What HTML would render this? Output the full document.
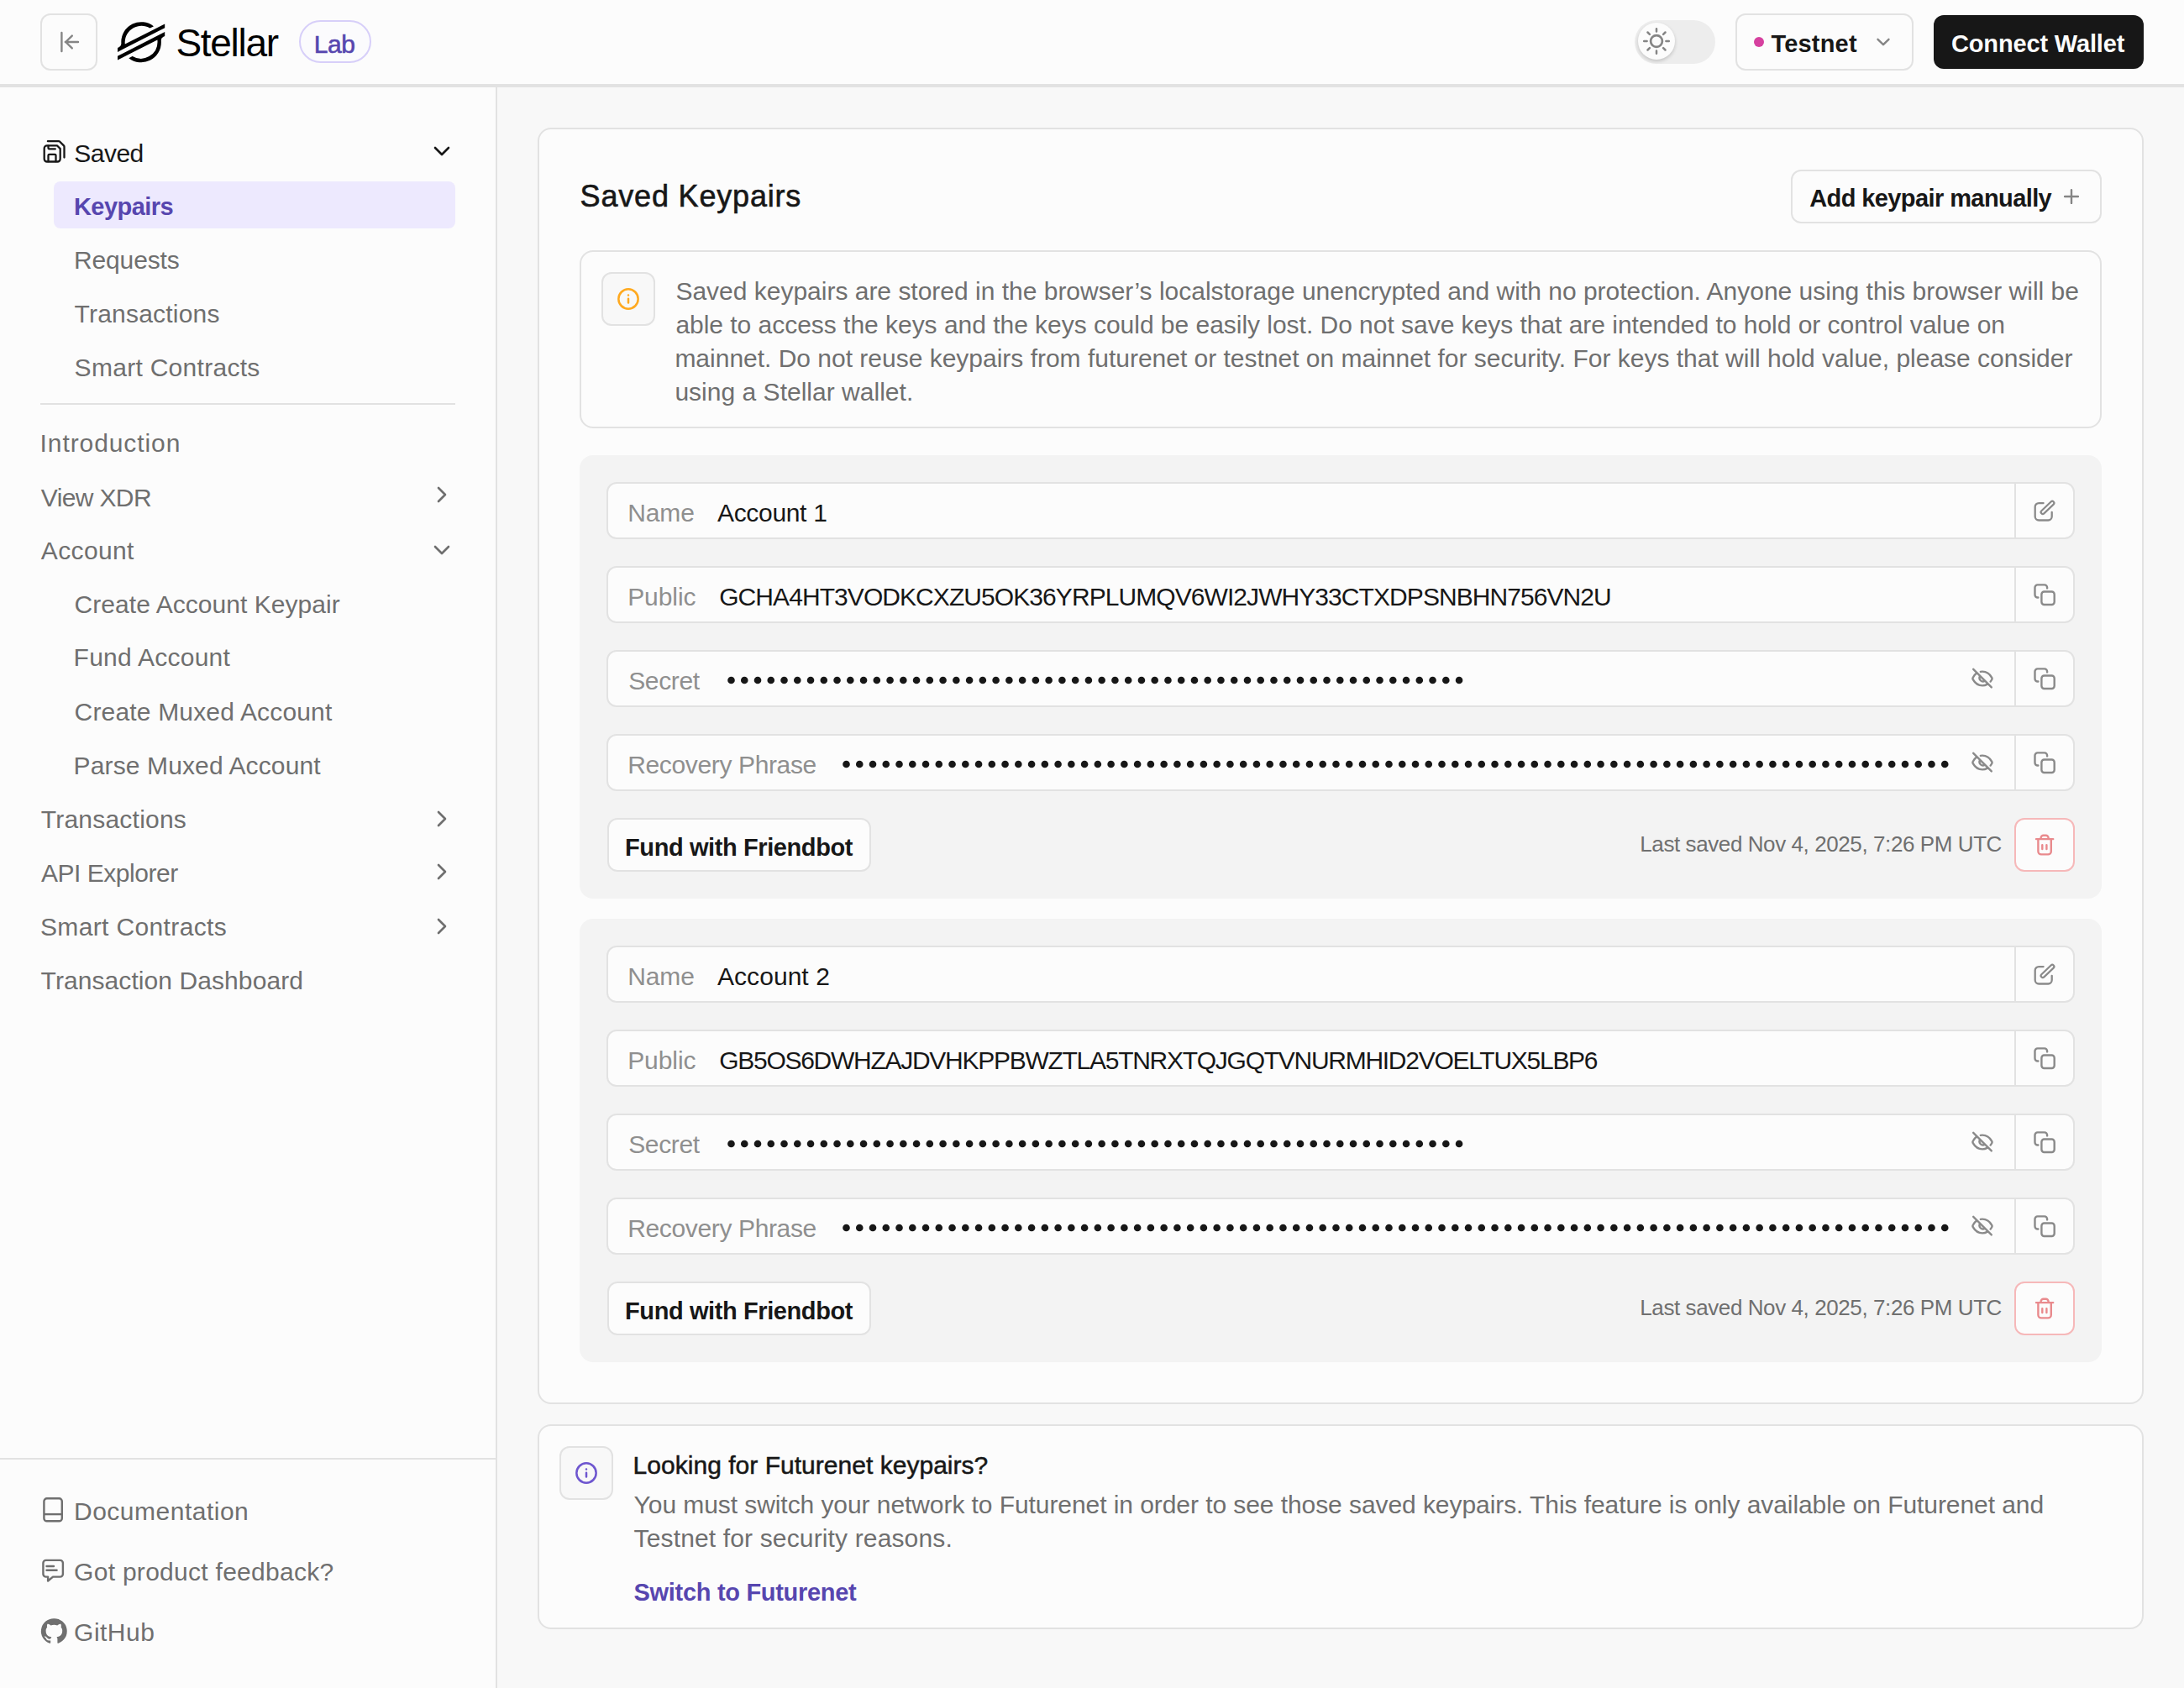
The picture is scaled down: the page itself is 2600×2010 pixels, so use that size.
<!DOCTYPE html>
<html><head><meta charset="utf-8"><title>Stellar Lab - Saved Keypairs</title>
<style>
html,body{margin:0;padding:0;}
body{width:1300px;height:1005px;position:relative;overflow:hidden;background:#f8f8f8;font-family:"Liberation Sans", sans-serif;}
@media (min-width:1950px){html{zoom:2;}}
.t{position:absolute;white-space:nowrap;line-height:20px;font-family:"Liberation Sans", sans-serif;}
svg{overflow:visible}
</style></head><body>
<div style="position:absolute;left:0.00px;top:0.00px;width:1300.00px;height:50.00px;box-sizing:border-box;background:#fcfcfc"></div>
<div style="position:absolute;left:0.00px;top:50.00px;width:1300.00px;height:2.00px;box-sizing:border-box;background:#e2e2e2"></div>
<div style="position:absolute;left:0.00px;top:52.00px;width:295.00px;height:953.00px;box-sizing:border-box;background:#fcfcfc"></div>
<div style="position:absolute;left:295.00px;top:52.00px;width:1.00px;height:953.00px;box-sizing:border-box;background:#e2e2e2"></div>
<div style="position:absolute;left:296.00px;top:52.00px;width:1004.00px;height:953.00px;box-sizing:border-box;background:#f8f8f8"></div>
<div style="position:absolute;left:24.00px;top:8.00px;width:34.00px;height:34.00px;box-sizing:border-box;border:1px solid #e2e2e2;border-radius:6px;background:#fcfcfc"></div>
<svg style="position:absolute;left:33.00px;top:17.00px;" width="16" height="16" viewBox="0 0 16 16" fill="none"><path d="M3.7 2.5v11M13.5 8H5.9M9.9 4.3 6.1 8l3.8 3.7" stroke="#858585" stroke-width="1.2" stroke-linecap="round" stroke-linejoin="round"/></svg>
<svg style="position:absolute;left:69.90px;top:12.80px;" width="28.1" height="24" viewBox="0 0 236.36 200" fill="none"><path fill="#000" d="M203,26.16l-28.46,14.5-137.43,70a82.49,82.49,0,0,1-.7-10.69A82.74,82.74,0,0,1,161.56,31.06l16.29-8.3,2.43-1.24A100,100,0,0,0,18.18,100q0,3.82.29,7.61a18.19,18.19,0,0,1-9.88,17.58L0,129.57V150l25.29-12.89,0,0,8.19-4.18,8.070-4.11v0L186.43,55l16.28-8.29,33.65-17.15V9.14Z"/><path fill="#000" d="M236.36,50,49.78,145,33.5,153.31,0,170.380v20.41l33.27-16.95,28.46-14.5L199.3,89.24A83.45,83.45,0,0,1,200,100,82.87,82.87,0,0,1,74.69,171.09l-1,.53-17.66,9A100,100,0,0,0,218.18,100c0-2.57-.1-5.14-.29-7.68a18.2,18.2,0,0,1,9.87-17.58l8.6-4.38Z"/></svg>
<div class="t" id="stellar" style="left:104.70px;top:15.30px;font-size:23px;font-weight:400;color:#000;letter-spacing:-0.650px;">Stellar</div>
<div style="position:absolute;left:178.10px;top:12.20px;width:42.70px;height:25.50px;box-sizing:border-box;border:1px solid #d7cff9;border-radius:13px;background:#fbfbfd"></div>
<div class="t" id="lab" style="left:186.90px;top:16.30px;font-size:15px;font-weight:400;color:#5746af;letter-spacing:-0.200px;-webkit-text-stroke:0.3px #5746af;">Lab</div>
<div style="position:absolute;left:973.00px;top:12.00px;width:48.00px;height:26.00px;box-sizing:border-box;background:#ededed;border-radius:13px"></div>
<div style="position:absolute;left:975.00px;top:13.60px;width:22.00px;height:22.00px;box-sizing:border-box;background:#fcfcfc;border-radius:50%;box-shadow:0 1px 2px rgba(0,0,0,0.18)"></div>
<svg style="position:absolute;left:977.75px;top:16.60px;" width="16" height="16" viewBox="0 0 16 16" fill="none"><circle cx="8" cy="8" r="3.45" stroke="#858585" stroke-width="1.35"/><path d="M8 0.6v1.7M8 13.7v1.7M0.6 8h1.7M13.7 8h1.7M2.75 2.75l1.2 1.2M12.05 12.05l1.2 1.2M2.75 13.25l1.2-1.2M12.05 3.95l1.2-1.2" stroke="#858585" stroke-width="1.25" stroke-linecap="round"/></svg>
<div style="position:absolute;left:1033.00px;top:8.00px;width:106.00px;height:34.00px;box-sizing:border-box;border:1px solid #e2e2e2;border-radius:6px;background:#fcfcfc"></div>
<div style="position:absolute;left:1044.00px;top:22.00px;width:6.00px;height:6.00px;box-sizing:border-box;background:#d6409f;border-radius:50%"></div>
<div class="t" id="testnet" style="left:1054.20px;top:16.10px;font-size:14.5px;font-weight:700;color:#171717;letter-spacing:0.100px;">Testnet</div>
<svg style="position:absolute;left:1113.00px;top:17.00px;" width="16" height="16" viewBox="0 0 16 16" fill="none"><path d="M4.75 6.4 8 9.6l3.25-3.2" stroke="#858585" stroke-width="1.2" stroke-linecap="round" stroke-linejoin="round"/></svg>
<div style="position:absolute;left:1151.00px;top:9.00px;width:125.00px;height:32.00px;box-sizing:border-box;background:#171717;border-radius:6px"></div>
<div class="t" id="connect" style="left:1161.50px;top:16.20px;font-size:14.5px;font-weight:700;color:#fcfcfc;letter-spacing:-0.077px;">Connect Wallet</div>
<svg style="position:absolute;left:23.75px;top:82.25px;" width="16" height="16" viewBox="0 0 16 16" fill="none"><path d="M4.45 1.6h6.5c.3 0 .5.1.7.3l2.3 2.3c.2.2.3.4.3.7v6.35" stroke="#171717" stroke-width="1.15" stroke-linecap="round" stroke-linejoin="round"/><path d="M9.95 4.15h-6a1.6 1.6 0 0 0-1.6 1.6v6.4a1.6 1.6 0 0 0 1.6 1.6h6.3a1.6 1.6 0 0 0 1.6-1.6v-6.1Z" stroke="#171717" stroke-width="1.15" stroke-linejoin="round"/><path d="M4.75 4.3v1.3c0 .35.25.6.6.6h3.55M4.75 13.6v-3.55c0-.35.25-.6.6-.6h3.3c.35 0 .6.25.6.6v3.55" stroke="#171717" stroke-width="1.15" stroke-linecap="round" stroke-linejoin="round"/></svg>
<div class="t" id="sb_saved" style="left:44.10px;top:81.30px;font-size:15px;font-weight:400;color:#171717;letter-spacing:-0.250px;">Saved</div>
<svg style="position:absolute;left:255.00px;top:81.90px;" width="16" height="16" viewBox="0 0 16 16" fill="none"><path d="M4 6l4 4 4-4" stroke="#171717" stroke-width="1.3" stroke-linecap="round" stroke-linejoin="round"/></svg>
<div style="position:absolute;left:32.00px;top:108.00px;width:239.00px;height:28.00px;box-sizing:border-box;background:#ede9fe;border-radius:4px"></div>
<div class="t" id="sb_keypairs" style="left:44.00px;top:113.10px;font-size:14.5px;font-weight:700;color:#5746af;letter-spacing:-0.286px;">Keypairs</div>
<div class="t" id="sb_requests" style="left:44.00px;top:144.80px;font-size:15px;font-weight:400;color:#6f6f6f;letter-spacing:-0.071px;">Requests</div>
<div class="t" id="sb_trans1" style="left:44.30px;top:176.80px;font-size:15px;font-weight:400;color:#6f6f6f;letter-spacing:0.100px;">Transactions</div>
<div class="t" id="sb_sc1" style="left:44.30px;top:208.90px;font-size:15px;font-weight:400;color:#6f6f6f;letter-spacing:0.143px;">Smart Contracts</div>
<div style="position:absolute;left:24.00px;top:240.00px;width:247.00px;height:1.00px;box-sizing:border-box;background:#e2e2e2"></div>
<div class="t" id="sb_intro" style="left:23.80px;top:253.80px;font-size:15px;font-weight:400;color:#6f6f6f;letter-spacing:0.455px;">Introduction</div>
<div class="t" id="sb_xdr" style="left:24.40px;top:286.40px;font-size:15px;font-weight:400;color:#6f6f6f;letter-spacing:-0.314px;">View XDR</div>
<svg style="position:absolute;left:255.00px;top:286.60px;" width="16" height="16" viewBox="0 0 16 16" fill="none"><path d="M6 4l4 4-4 4" stroke="#6f6f6f" stroke-width="1.3" stroke-linecap="round" stroke-linejoin="round"/></svg>
<div class="t" id="sb_account" style="left:24.40px;top:318.20px;font-size:15px;font-weight:400;color:#6f6f6f;letter-spacing:0.183px;">Account</div>
<svg style="position:absolute;left:255.00px;top:319.40px;" width="16" height="16" viewBox="0 0 16 16" fill="none"><path d="M4 6l4 4 4-4" stroke="#6f6f6f" stroke-width="1.3" stroke-linecap="round" stroke-linejoin="round"/></svg>
<div class="t" id="sb_cak" style="left:44.30px;top:350.00px;font-size:15px;font-weight:400;color:#6f6f6f;letter-spacing:0.024px;">Create Account Keypair</div>
<div class="t" id="sb_fund" style="left:43.80px;top:381.70px;font-size:15px;font-weight:400;color:#6f6f6f;letter-spacing:0.127px;">Fund Account</div>
<div class="t" id="sb_cma" style="left:44.30px;top:414.10px;font-size:15px;font-weight:400;color:#6f6f6f;letter-spacing:0.084px;">Create Muxed Account</div>
<div class="t" id="sb_pma" style="left:43.80px;top:445.90px;font-size:15px;font-weight:400;color:#6f6f6f;letter-spacing:0.061px;">Parse Muxed Account</div>
<div class="t" id="sb_trans2" style="left:24.40px;top:478.10px;font-size:15px;font-weight:400;color:#6f6f6f;letter-spacing:0.109px;">Transactions</div>
<svg style="position:absolute;left:255.00px;top:479.30px;" width="16" height="16" viewBox="0 0 16 16" fill="none"><path d="M6 4l4 4-4 4" stroke="#6f6f6f" stroke-width="1.3" stroke-linecap="round" stroke-linejoin="round"/></svg>
<div class="t" id="sb_api" style="left:24.50px;top:509.90px;font-size:15px;font-weight:400;color:#6f6f6f;letter-spacing:-0.236px;">API Explorer</div>
<svg style="position:absolute;left:255.00px;top:511.10px;" width="16" height="16" viewBox="0 0 16 16" fill="none"><path d="M6 4l4 4-4 4" stroke="#6f6f6f" stroke-width="1.3" stroke-linecap="round" stroke-linejoin="round"/></svg>
<div class="t" id="sb_sc2" style="left:24.00px;top:542.10px;font-size:15px;font-weight:400;color:#6f6f6f;letter-spacing:0.179px;">Smart Contracts</div>
<svg style="position:absolute;left:255.00px;top:543.30px;" width="16" height="16" viewBox="0 0 16 16" fill="none"><path d="M6 4l4 4-4 4" stroke="#6f6f6f" stroke-width="1.3" stroke-linecap="round" stroke-linejoin="round"/></svg>
<div class="t" id="sb_dash" style="left:24.30px;top:574.10px;font-size:15px;font-weight:400;color:#6f6f6f;letter-spacing:0.040px;">Transaction Dashboard</div>
<div style="position:absolute;left:0.00px;top:868.00px;width:295.00px;height:1.00px;box-sizing:border-box;background:#e2e2e2"></div>
<svg style="position:absolute;left:24.00px;top:891.50px;" width="16" height="16" viewBox="0 0 16 16" fill="none"><rect x="2.2" y="0.65" width="10.7" height="13.5" rx="1.7" stroke="#6f6f6f" stroke-width="1.2"/><path d="M2.2 10.05h10.7" stroke="#6f6f6f" stroke-width="1.2"/></svg>
<div class="t" id="sb_docs" style="left:44.00px;top:890.10px;font-size:15px;font-weight:400;color:#6f6f6f;letter-spacing:0.250px;">Documentation</div>
<svg style="position:absolute;left:24.00px;top:927.50px;" width="16" height="16" viewBox="0 0 16 16" fill="none"><path d="M3.4 1.45h8.35c.95 0 1.7.75 1.7 1.7v6.45c0 .95-.75 1.7-1.7 1.7H7.5l-2.95 2.45v-2.45H3.4c-.95 0-1.7-.75-1.7-1.7V3.15c0-.95.75-1.7 1.7-1.7Z" stroke="#6f6f6f" stroke-width="1.2" stroke-linejoin="round"/><path d="M3.75 5h4.25M3.75 7.35h6.05" stroke="#6f6f6f" stroke-width="1.2" stroke-linecap="round"/></svg>
<div class="t" id="sb_feedback" style="left:44.05px;top:926.00px;font-size:15px;font-weight:400;color:#6f6f6f;letter-spacing:0.140px;">Got product feedback?</div>
<svg style="position:absolute;left:24.00px;top:962.80px;" width="16" height="16" viewBox="0 0 16 16" fill="none"><path fill="#6f6f6f" d="M8 0.6a7.6 7.6 0 0 0-2.4 14.8c.4.1.5-.2.5-.4v-1.3c-2.1.5-2.6-.9-2.6-.9-.3-.9-.8-1.1-.8-1.1-.7-.5.1-.5.1-.5.8.1 1.2.8 1.2.8.7 1.2 1.8.8 2.2.6.1-.5.3-.8.5-1-1.7-.2-3.4-.8-3.4-3.7 0-.8.3-1.5.8-2-.1-.2-.3-1 .1-2 0 0 .6-.2 2.1.8a7 7 0 0 1 3.8 0c1.5-1 2.1-.8 2.1-.8.4 1 .2 1.8.1 2 .5.5.8 1.2.8 2 0 2.9-1.8 3.5-3.4 3.7.3.2.5.7.5 1.4V15c0 .2.1.5.5.4A7.6 7.6 0 0 0 8 .6Z"/></svg>
<div class="t" id="sb_github" style="left:44.05px;top:962.00px;font-size:15px;font-weight:400;color:#6f6f6f;letter-spacing:0.240px;">GitHub</div>
<div style="position:absolute;left:320.00px;top:76.00px;width:956.00px;height:760.00px;box-sizing:border-box;border:1px solid #e2e2e2;border-radius:8px;background:#fcfcfc"></div>
<div class="t" id="h_saved" style="left:345.30px;top:106.80px;font-size:18px;font-weight:400;color:#171717;letter-spacing:0.408px;-webkit-text-stroke:0.3px #171717;">Saved Keypairs</div>
<div style="position:absolute;left:1066.00px;top:101.00px;width:185.00px;height:32.00px;box-sizing:border-box;border:1px solid #e2e2e2;border-radius:6px;background:#fcfcfc"></div>
<div class="t" id="addkp" style="left:1077.10px;top:107.80px;font-size:14.5px;font-weight:700;color:#171717;letter-spacing:-0.295px;">Add keypair manually</div>
<svg style="position:absolute;left:1225.00px;top:109.00px;" width="16" height="16" viewBox="0 0 16 16" fill="none"><path d="M8 4.05v7.9M4.05 8h7.9" stroke="#858585" stroke-width="1.2" stroke-linecap="round"/></svg>
<div style="position:absolute;left:345.00px;top:149.00px;width:906.00px;height:106.00px;box-sizing:border-box;border:1px solid #e2e2e2;border-radius:8px;background:#fcfcfc"></div>
<div style="position:absolute;left:358.00px;top:162.00px;width:32.00px;height:32.00px;box-sizing:border-box;border:1px solid #e2e2e2;border-radius:6px;background:#f8f8f8"></div>
<svg style="position:absolute;left:367.00px;top:171.00px;" width="14" height="14" viewBox="0 0 14 14" fill="none"><circle cx="7" cy="7" r="5.83" stroke="#ffa91f" stroke-width="1.25"/><path d="M7 9.3V6.9M7 4.7h.01" stroke="#ffa91f" stroke-width="1.25" stroke-linecap="round"/></svg>
<div class="t" id="alert0" style="left:402.20px;top:163.30px;font-size:15px;font-weight:400;color:#6f6f6f;letter-spacing:-0.004px;">Saved keypairs are stored in the browser’s localstorage unencrypted and with no protection. Anyone using this browser will be</div>
<div class="t" id="alert1" style="left:402.20px;top:183.30px;font-size:15px;font-weight:400;color:#6f6f6f;letter-spacing:-0.014px;">able to access the keys and the keys could be easily lost. Do not save keys that are intended to hold or control value on</div>
<div class="t" id="alert2" style="left:401.70px;top:203.30px;font-size:15px;font-weight:400;color:#6f6f6f;letter-spacing:-0.005px;">mainnet. Do not reuse keypairs from futurenet or testnet on mainnet for security. For keys that will hold value, please consider</div>
<div class="t" id="alert3" style="left:401.70px;top:223.30px;font-size:15px;font-weight:400;color:#6f6f6f;letter-spacing:0.009px;">using a Stellar wallet.</div>
<div style="position:absolute;left:345.00px;top:271.00px;width:906.00px;height:264.00px;box-sizing:border-box;background:#f3f3f3;border-radius:8px"></div>
<div style="position:absolute;left:361.00px;top:287.00px;width:874.00px;height:34.00px;box-sizing:border-box;border:1px solid #e2e2e2;border-radius:6px;background:#fcfcfc"></div>
<div style="position:absolute;left:1199.00px;top:287.00px;width:1.00px;height:34.00px;box-sizing:border-box;background:#e2e2e2"></div>
<div class="t" id="lbl_name1" style="left:373.60px;top:295.25px;font-size:15px;font-weight:400;color:#8f8f8f;letter-spacing:-0.067px;">Name</div>
<div class="t" id="val_name1" style="left:427.00px;top:295.25px;font-size:15px;font-weight:400;color:#171717;letter-spacing:-0.163px;">Account 1</div>
<svg style="position:absolute;left:1209.00px;top:295.90px;" width="16" height="16" viewBox="0 0 16 16" fill="none"><path d="M7.3 3.55H4.55a2.2 2.2 0 0 0-2.2 2.2v5.8c0 1.2 1 2.2 2.2 2.2h5.6c1.2 0 2.2-1 2.2-2.2V8.9" stroke="#8a8a8a" stroke-width="1.15" stroke-linecap="round"/><rect x="4.75" y="5.1" width="10" height="2.2" rx="1.1" transform="rotate(-43.7 9.75 6.2)" stroke="#8a8a8a" stroke-width="1.1"/></svg>
<div style="position:absolute;left:361.00px;top:337.00px;width:874.00px;height:34.00px;box-sizing:border-box;border:1px solid #e2e2e2;border-radius:6px;background:#fcfcfc"></div>
<div style="position:absolute;left:1199.00px;top:337.00px;width:1.00px;height:34.00px;box-sizing:border-box;background:#e2e2e2"></div>
<div class="t" id="lbl_pub1" style="left:373.60px;top:345.25px;font-size:15px;font-weight:400;color:#8f8f8f;letter-spacing:-0.040px;">Public</div>
<div class="t" id="val_pub1" style="left:428.10px;top:345.25px;font-size:15px;font-weight:400;color:#171717;letter-spacing:-0.464px;">GCHA4HT3VODKCXZU5OK36YRPLUMQV6WI2JWHY33CTXDPSNBHN756VN2U</div>
<svg style="position:absolute;left:1209.00px;top:345.90px;" width="16" height="16" viewBox="0 0 16 16" fill="none"><path d="M4.2 9.75H3.85A1.6 1.6 0 0 1 2.25 8.15V3.8A1.6 1.6 0 0 1 3.85 2.2h4.1a1.6 1.6 0 0 1 1.6 1.6v.4" stroke="#8a8a8a" stroke-width="1.2" stroke-linecap="round"/><rect x="6.2" y="6.25" width="7.65" height="7.75" rx="1.6" stroke="#8a8a8a" stroke-width="1.2"/></svg>
<div style="position:absolute;left:361.00px;top:387.00px;width:874.00px;height:34.00px;box-sizing:border-box;border:1px solid #e2e2e2;border-radius:6px;background:#fcfcfc"></div>
<div style="position:absolute;left:1199.00px;top:387.00px;width:1.00px;height:34.00px;box-sizing:border-box;background:#e2e2e2"></div>
<div class="t" id="lbl_sec1" style="left:374.10px;top:395.25px;font-size:15px;font-weight:400;color:#8f8f8f;letter-spacing:-0.180px;">Secret</div>
<svg style="position:absolute;left:432.90px;top:399.80px;" width="441.17" height="10" viewBox="0 0 441.17 10" fill="none"><circle cx="2.250" cy="5" r="2.15" fill="#171717"/><circle cx="10.128" cy="5" r="2.15" fill="#171717"/><circle cx="18.006" cy="5" r="2.15" fill="#171717"/><circle cx="25.884" cy="5" r="2.15" fill="#171717"/><circle cx="33.762" cy="5" r="2.15" fill="#171717"/><circle cx="41.640" cy="5" r="2.15" fill="#171717"/><circle cx="49.518" cy="5" r="2.15" fill="#171717"/><circle cx="57.396" cy="5" r="2.15" fill="#171717"/><circle cx="65.274" cy="5" r="2.15" fill="#171717"/><circle cx="73.152" cy="5" r="2.15" fill="#171717"/><circle cx="81.030" cy="5" r="2.15" fill="#171717"/><circle cx="88.908" cy="5" r="2.15" fill="#171717"/><circle cx="96.786" cy="5" r="2.15" fill="#171717"/><circle cx="104.664" cy="5" r="2.15" fill="#171717"/><circle cx="112.542" cy="5" r="2.15" fill="#171717"/><circle cx="120.420" cy="5" r="2.15" fill="#171717"/><circle cx="128.298" cy="5" r="2.15" fill="#171717"/><circle cx="136.176" cy="5" r="2.15" fill="#171717"/><circle cx="144.054" cy="5" r="2.15" fill="#171717"/><circle cx="151.932" cy="5" r="2.15" fill="#171717"/><circle cx="159.810" cy="5" r="2.15" fill="#171717"/><circle cx="167.688" cy="5" r="2.15" fill="#171717"/><circle cx="175.566" cy="5" r="2.15" fill="#171717"/><circle cx="183.444" cy="5" r="2.15" fill="#171717"/><circle cx="191.322" cy="5" r="2.15" fill="#171717"/><circle cx="199.200" cy="5" r="2.15" fill="#171717"/><circle cx="207.078" cy="5" r="2.15" fill="#171717"/><circle cx="214.956" cy="5" r="2.15" fill="#171717"/><circle cx="222.834" cy="5" r="2.15" fill="#171717"/><circle cx="230.712" cy="5" r="2.15" fill="#171717"/><circle cx="238.590" cy="5" r="2.15" fill="#171717"/><circle cx="246.468" cy="5" r="2.15" fill="#171717"/><circle cx="254.346" cy="5" r="2.15" fill="#171717"/><circle cx="262.224" cy="5" r="2.15" fill="#171717"/><circle cx="270.102" cy="5" r="2.15" fill="#171717"/><circle cx="277.980" cy="5" r="2.15" fill="#171717"/><circle cx="285.858" cy="5" r="2.15" fill="#171717"/><circle cx="293.736" cy="5" r="2.15" fill="#171717"/><circle cx="301.614" cy="5" r="2.15" fill="#171717"/><circle cx="309.492" cy="5" r="2.15" fill="#171717"/><circle cx="317.370" cy="5" r="2.15" fill="#171717"/><circle cx="325.248" cy="5" r="2.15" fill="#171717"/><circle cx="333.126" cy="5" r="2.15" fill="#171717"/><circle cx="341.004" cy="5" r="2.15" fill="#171717"/><circle cx="348.882" cy="5" r="2.15" fill="#171717"/><circle cx="356.760" cy="5" r="2.15" fill="#171717"/><circle cx="364.638" cy="5" r="2.15" fill="#171717"/><circle cx="372.516" cy="5" r="2.15" fill="#171717"/><circle cx="380.394" cy="5" r="2.15" fill="#171717"/><circle cx="388.272" cy="5" r="2.15" fill="#171717"/><circle cx="396.150" cy="5" r="2.15" fill="#171717"/><circle cx="404.028" cy="5" r="2.15" fill="#171717"/><circle cx="411.906" cy="5" r="2.15" fill="#171717"/><circle cx="419.784" cy="5" r="2.15" fill="#171717"/><circle cx="427.662" cy="5" r="2.15" fill="#171717"/><circle cx="435.540" cy="5" r="2.15" fill="#171717"/></svg>
<svg style="position:absolute;left:1172.00px;top:396.10px;" width="16" height="16" viewBox="0 0 16 16" fill="none"><path d="M6.9 3.9c.4-.1.7-.1 1.1-.1 2.6 0 4.6 1.8 5.6 3.6.1.2.2.4.2.6s-.1.4-.2.6c-.2.4-.5.8-.8 1.2M4.4 4.9C3.6 5.5 2.9 6.4 2.4 7.4c-.1.2-.2.4-.2.6s.1.4.2.6c1 1.8 3 3.6 5.6 3.6 1.1 0 2.2-.4 3.1-.9M6.6 6.5A2.1 2.1 0 0 0 9.5 9.4M2.6 2.4l10.8 10.8" stroke="#8a8a8a" stroke-width="1.2" stroke-linecap="round" stroke-linejoin="round"/></svg>
<svg style="position:absolute;left:1209.00px;top:395.90px;" width="16" height="16" viewBox="0 0 16 16" fill="none"><path d="M4.2 9.75H3.85A1.6 1.6 0 0 1 2.25 8.15V3.8A1.6 1.6 0 0 1 3.85 2.2h4.1a1.6 1.6 0 0 1 1.6 1.6v.4" stroke="#8a8a8a" stroke-width="1.2" stroke-linecap="round"/><rect x="6.2" y="6.25" width="7.65" height="7.75" rx="1.6" stroke="#8a8a8a" stroke-width="1.2"/></svg>
<div style="position:absolute;left:361.00px;top:437.00px;width:874.00px;height:34.00px;box-sizing:border-box;border:1px solid #e2e2e2;border-radius:6px;background:#fcfcfc"></div>
<div style="position:absolute;left:1199.00px;top:437.00px;width:1.00px;height:34.00px;box-sizing:border-box;background:#e2e2e2"></div>
<div class="t" id="lbl_rec1" style="left:373.60px;top:445.25px;font-size:15px;font-weight:400;color:#8f8f8f;letter-spacing:-0.179px;">Recovery Phrase</div>
<svg style="position:absolute;left:501.35px;top:449.80px;" width="661.75" height="10" viewBox="0 0 661.75 10" fill="none"><circle cx="2.250" cy="5" r="2.15" fill="#171717"/><circle cx="10.128" cy="5" r="2.15" fill="#171717"/><circle cx="18.006" cy="5" r="2.15" fill="#171717"/><circle cx="25.884" cy="5" r="2.15" fill="#171717"/><circle cx="33.762" cy="5" r="2.15" fill="#171717"/><circle cx="41.640" cy="5" r="2.15" fill="#171717"/><circle cx="49.518" cy="5" r="2.15" fill="#171717"/><circle cx="57.396" cy="5" r="2.15" fill="#171717"/><circle cx="65.274" cy="5" r="2.15" fill="#171717"/><circle cx="73.152" cy="5" r="2.15" fill="#171717"/><circle cx="81.030" cy="5" r="2.15" fill="#171717"/><circle cx="88.908" cy="5" r="2.15" fill="#171717"/><circle cx="96.786" cy="5" r="2.15" fill="#171717"/><circle cx="104.664" cy="5" r="2.15" fill="#171717"/><circle cx="112.542" cy="5" r="2.15" fill="#171717"/><circle cx="120.420" cy="5" r="2.15" fill="#171717"/><circle cx="128.298" cy="5" r="2.15" fill="#171717"/><circle cx="136.176" cy="5" r="2.15" fill="#171717"/><circle cx="144.054" cy="5" r="2.15" fill="#171717"/><circle cx="151.932" cy="5" r="2.15" fill="#171717"/><circle cx="159.810" cy="5" r="2.15" fill="#171717"/><circle cx="167.688" cy="5" r="2.15" fill="#171717"/><circle cx="175.566" cy="5" r="2.15" fill="#171717"/><circle cx="183.444" cy="5" r="2.15" fill="#171717"/><circle cx="191.322" cy="5" r="2.15" fill="#171717"/><circle cx="199.200" cy="5" r="2.15" fill="#171717"/><circle cx="207.078" cy="5" r="2.15" fill="#171717"/><circle cx="214.956" cy="5" r="2.15" fill="#171717"/><circle cx="222.834" cy="5" r="2.15" fill="#171717"/><circle cx="230.712" cy="5" r="2.15" fill="#171717"/><circle cx="238.590" cy="5" r="2.15" fill="#171717"/><circle cx="246.468" cy="5" r="2.15" fill="#171717"/><circle cx="254.346" cy="5" r="2.15" fill="#171717"/><circle cx="262.224" cy="5" r="2.15" fill="#171717"/><circle cx="270.102" cy="5" r="2.15" fill="#171717"/><circle cx="277.980" cy="5" r="2.15" fill="#171717"/><circle cx="285.858" cy="5" r="2.15" fill="#171717"/><circle cx="293.736" cy="5" r="2.15" fill="#171717"/><circle cx="301.614" cy="5" r="2.15" fill="#171717"/><circle cx="309.492" cy="5" r="2.15" fill="#171717"/><circle cx="317.370" cy="5" r="2.15" fill="#171717"/><circle cx="325.248" cy="5" r="2.15" fill="#171717"/><circle cx="333.126" cy="5" r="2.15" fill="#171717"/><circle cx="341.004" cy="5" r="2.15" fill="#171717"/><circle cx="348.882" cy="5" r="2.15" fill="#171717"/><circle cx="356.760" cy="5" r="2.15" fill="#171717"/><circle cx="364.638" cy="5" r="2.15" fill="#171717"/><circle cx="372.516" cy="5" r="2.15" fill="#171717"/><circle cx="380.394" cy="5" r="2.15" fill="#171717"/><circle cx="388.272" cy="5" r="2.15" fill="#171717"/><circle cx="396.150" cy="5" r="2.15" fill="#171717"/><circle cx="404.028" cy="5" r="2.15" fill="#171717"/><circle cx="411.906" cy="5" r="2.15" fill="#171717"/><circle cx="419.784" cy="5" r="2.15" fill="#171717"/><circle cx="427.662" cy="5" r="2.15" fill="#171717"/><circle cx="435.540" cy="5" r="2.15" fill="#171717"/><circle cx="443.418" cy="5" r="2.15" fill="#171717"/><circle cx="451.296" cy="5" r="2.15" fill="#171717"/><circle cx="459.174" cy="5" r="2.15" fill="#171717"/><circle cx="467.052" cy="5" r="2.15" fill="#171717"/><circle cx="474.930" cy="5" r="2.15" fill="#171717"/><circle cx="482.808" cy="5" r="2.15" fill="#171717"/><circle cx="490.686" cy="5" r="2.15" fill="#171717"/><circle cx="498.564" cy="5" r="2.15" fill="#171717"/><circle cx="506.442" cy="5" r="2.15" fill="#171717"/><circle cx="514.320" cy="5" r="2.15" fill="#171717"/><circle cx="522.198" cy="5" r="2.15" fill="#171717"/><circle cx="530.076" cy="5" r="2.15" fill="#171717"/><circle cx="537.954" cy="5" r="2.15" fill="#171717"/><circle cx="545.832" cy="5" r="2.15" fill="#171717"/><circle cx="553.710" cy="5" r="2.15" fill="#171717"/><circle cx="561.588" cy="5" r="2.15" fill="#171717"/><circle cx="569.466" cy="5" r="2.15" fill="#171717"/><circle cx="577.344" cy="5" r="2.15" fill="#171717"/><circle cx="585.222" cy="5" r="2.15" fill="#171717"/><circle cx="593.100" cy="5" r="2.15" fill="#171717"/><circle cx="600.978" cy="5" r="2.15" fill="#171717"/><circle cx="608.856" cy="5" r="2.15" fill="#171717"/><circle cx="616.734" cy="5" r="2.15" fill="#171717"/><circle cx="624.612" cy="5" r="2.15" fill="#171717"/><circle cx="632.490" cy="5" r="2.15" fill="#171717"/><circle cx="640.368" cy="5" r="2.15" fill="#171717"/><circle cx="648.246" cy="5" r="2.15" fill="#171717"/><circle cx="656.124" cy="5" r="2.15" fill="#171717"/></svg>
<svg style="position:absolute;left:1172.00px;top:446.10px;" width="16" height="16" viewBox="0 0 16 16" fill="none"><path d="M6.9 3.9c.4-.1.7-.1 1.1-.1 2.6 0 4.6 1.8 5.6 3.6.1.2.2.4.2.6s-.1.4-.2.6c-.2.4-.5.8-.8 1.2M4.4 4.9C3.6 5.5 2.9 6.4 2.4 7.4c-.1.2-.2.4-.2.6s.1.4.2.6c1 1.8 3 3.6 5.6 3.6 1.1 0 2.2-.4 3.1-.9M6.6 6.5A2.1 2.1 0 0 0 9.5 9.4M2.6 2.4l10.8 10.8" stroke="#8a8a8a" stroke-width="1.2" stroke-linecap="round" stroke-linejoin="round"/></svg>
<svg style="position:absolute;left:1209.00px;top:445.90px;" width="16" height="16" viewBox="0 0 16 16" fill="none"><path d="M4.2 9.75H3.85A1.6 1.6 0 0 1 2.25 8.15V3.8A1.6 1.6 0 0 1 3.85 2.2h4.1a1.6 1.6 0 0 1 1.6 1.6v.4" stroke="#8a8a8a" stroke-width="1.2" stroke-linecap="round"/><rect x="6.2" y="6.25" width="7.65" height="7.75" rx="1.6" stroke="#8a8a8a" stroke-width="1.2"/></svg>
<div style="position:absolute;left:361.50px;top:487.00px;width:157.00px;height:32.00px;box-sizing:border-box;border:1px solid #e2e2e2;border-radius:6px;background:#fcfcfc"></div>
<div class="t" id="fund1" style="left:372.00px;top:494.40px;font-size:14.5px;font-weight:700;color:#171717;letter-spacing:-0.200px;">Fund with Friendbot</div>
<div class="t" id="last1" style="left:976.15px;top:492.50px;font-size:13px;font-weight:400;color:#6f6f6f;letter-spacing:-0.206px;">Last saved Nov 4, 2025, 7:26 PM UTC</div>
<div style="position:absolute;left:1199.20px;top:487.00px;width:35.80px;height:32.00px;box-sizing:border-box;border:1px solid #f6b8b9;border-radius:6px;background:#fcfcfc"></div>
<svg style="position:absolute;left:1209.00px;top:494.90px;" width="16" height="16" viewBox="0 0 16 16" fill="none"><path d="M3 4.55h10.1M4.2 4.55v7.3c0 1 .8 1.85 1.85 1.85h4c1 0 1.85-.8 1.85-1.85v-7.3M5.8 4.4V3.9c0-.85.7-1.55 1.55-1.55h1.4c.85 0 1.55.7 1.55 1.55v.5M6.65 8.1v2.4M9.2 8.1v2.4" stroke="#e98a8d" stroke-width="1.2" stroke-linecap="round" stroke-linejoin="round"/></svg>
<div style="position:absolute;left:345.00px;top:547.00px;width:906.00px;height:264.00px;box-sizing:border-box;background:#f3f3f3;border-radius:8px"></div>
<div style="position:absolute;left:361.00px;top:563.00px;width:874.00px;height:34.00px;box-sizing:border-box;border:1px solid #e2e2e2;border-radius:6px;background:#fcfcfc"></div>
<div style="position:absolute;left:1199.00px;top:563.00px;width:1.00px;height:34.00px;box-sizing:border-box;background:#e2e2e2"></div>
<div class="t" id="lbl_name2" style="left:373.60px;top:571.25px;font-size:15px;font-weight:400;color:#8f8f8f;letter-spacing:-0.067px;">Name</div>
<div class="t" id="val_name2" style="left:427.00px;top:571.25px;font-size:15px;font-weight:400;color:#171717;letter-spacing:0.025px;">Account 2</div>
<svg style="position:absolute;left:1209.00px;top:571.90px;" width="16" height="16" viewBox="0 0 16 16" fill="none"><path d="M7.3 3.55H4.55a2.2 2.2 0 0 0-2.2 2.2v5.8c0 1.2 1 2.2 2.2 2.2h5.6c1.2 0 2.2-1 2.2-2.2V8.9" stroke="#8a8a8a" stroke-width="1.15" stroke-linecap="round"/><rect x="4.75" y="5.1" width="10" height="2.2" rx="1.1" transform="rotate(-43.7 9.75 6.2)" stroke="#8a8a8a" stroke-width="1.1"/></svg>
<div style="position:absolute;left:361.00px;top:613.00px;width:874.00px;height:34.00px;box-sizing:border-box;border:1px solid #e2e2e2;border-radius:6px;background:#fcfcfc"></div>
<div style="position:absolute;left:1199.00px;top:613.00px;width:1.00px;height:34.00px;box-sizing:border-box;background:#e2e2e2"></div>
<div class="t" id="lbl_pub2" style="left:373.60px;top:621.25px;font-size:15px;font-weight:400;color:#8f8f8f;letter-spacing:-0.040px;">Public</div>
<div class="t" id="val_pub2" style="left:428.10px;top:621.25px;font-size:15px;font-weight:400;color:#171717;letter-spacing:-0.636px;">GB5OS6DWHZAJDVHKPPBWZTLA5TNRXTQJGQTVNURMHID2VOELTUX5LBP6</div>
<svg style="position:absolute;left:1209.00px;top:621.90px;" width="16" height="16" viewBox="0 0 16 16" fill="none"><path d="M4.2 9.75H3.85A1.6 1.6 0 0 1 2.25 8.15V3.8A1.6 1.6 0 0 1 3.85 2.2h4.1a1.6 1.6 0 0 1 1.6 1.6v.4" stroke="#8a8a8a" stroke-width="1.2" stroke-linecap="round"/><rect x="6.2" y="6.25" width="7.65" height="7.75" rx="1.6" stroke="#8a8a8a" stroke-width="1.2"/></svg>
<div style="position:absolute;left:361.00px;top:663.00px;width:874.00px;height:34.00px;box-sizing:border-box;border:1px solid #e2e2e2;border-radius:6px;background:#fcfcfc"></div>
<div style="position:absolute;left:1199.00px;top:663.00px;width:1.00px;height:34.00px;box-sizing:border-box;background:#e2e2e2"></div>
<div class="t" id="lbl_sec2" style="left:374.10px;top:671.25px;font-size:15px;font-weight:400;color:#8f8f8f;letter-spacing:-0.180px;">Secret</div>
<svg style="position:absolute;left:432.90px;top:675.80px;" width="441.17" height="10" viewBox="0 0 441.17 10" fill="none"><circle cx="2.250" cy="5" r="2.15" fill="#171717"/><circle cx="10.128" cy="5" r="2.15" fill="#171717"/><circle cx="18.006" cy="5" r="2.15" fill="#171717"/><circle cx="25.884" cy="5" r="2.15" fill="#171717"/><circle cx="33.762" cy="5" r="2.15" fill="#171717"/><circle cx="41.640" cy="5" r="2.15" fill="#171717"/><circle cx="49.518" cy="5" r="2.15" fill="#171717"/><circle cx="57.396" cy="5" r="2.15" fill="#171717"/><circle cx="65.274" cy="5" r="2.15" fill="#171717"/><circle cx="73.152" cy="5" r="2.15" fill="#171717"/><circle cx="81.030" cy="5" r="2.15" fill="#171717"/><circle cx="88.908" cy="5" r="2.15" fill="#171717"/><circle cx="96.786" cy="5" r="2.15" fill="#171717"/><circle cx="104.664" cy="5" r="2.15" fill="#171717"/><circle cx="112.542" cy="5" r="2.15" fill="#171717"/><circle cx="120.420" cy="5" r="2.15" fill="#171717"/><circle cx="128.298" cy="5" r="2.15" fill="#171717"/><circle cx="136.176" cy="5" r="2.15" fill="#171717"/><circle cx="144.054" cy="5" r="2.15" fill="#171717"/><circle cx="151.932" cy="5" r="2.15" fill="#171717"/><circle cx="159.810" cy="5" r="2.15" fill="#171717"/><circle cx="167.688" cy="5" r="2.15" fill="#171717"/><circle cx="175.566" cy="5" r="2.15" fill="#171717"/><circle cx="183.444" cy="5" r="2.15" fill="#171717"/><circle cx="191.322" cy="5" r="2.15" fill="#171717"/><circle cx="199.200" cy="5" r="2.15" fill="#171717"/><circle cx="207.078" cy="5" r="2.15" fill="#171717"/><circle cx="214.956" cy="5" r="2.15" fill="#171717"/><circle cx="222.834" cy="5" r="2.15" fill="#171717"/><circle cx="230.712" cy="5" r="2.15" fill="#171717"/><circle cx="238.590" cy="5" r="2.15" fill="#171717"/><circle cx="246.468" cy="5" r="2.15" fill="#171717"/><circle cx="254.346" cy="5" r="2.15" fill="#171717"/><circle cx="262.224" cy="5" r="2.15" fill="#171717"/><circle cx="270.102" cy="5" r="2.15" fill="#171717"/><circle cx="277.980" cy="5" r="2.15" fill="#171717"/><circle cx="285.858" cy="5" r="2.15" fill="#171717"/><circle cx="293.736" cy="5" r="2.15" fill="#171717"/><circle cx="301.614" cy="5" r="2.15" fill="#171717"/><circle cx="309.492" cy="5" r="2.15" fill="#171717"/><circle cx="317.370" cy="5" r="2.15" fill="#171717"/><circle cx="325.248" cy="5" r="2.15" fill="#171717"/><circle cx="333.126" cy="5" r="2.15" fill="#171717"/><circle cx="341.004" cy="5" r="2.15" fill="#171717"/><circle cx="348.882" cy="5" r="2.15" fill="#171717"/><circle cx="356.760" cy="5" r="2.15" fill="#171717"/><circle cx="364.638" cy="5" r="2.15" fill="#171717"/><circle cx="372.516" cy="5" r="2.15" fill="#171717"/><circle cx="380.394" cy="5" r="2.15" fill="#171717"/><circle cx="388.272" cy="5" r="2.15" fill="#171717"/><circle cx="396.150" cy="5" r="2.15" fill="#171717"/><circle cx="404.028" cy="5" r="2.15" fill="#171717"/><circle cx="411.906" cy="5" r="2.15" fill="#171717"/><circle cx="419.784" cy="5" r="2.15" fill="#171717"/><circle cx="427.662" cy="5" r="2.15" fill="#171717"/><circle cx="435.540" cy="5" r="2.15" fill="#171717"/></svg>
<svg style="position:absolute;left:1172.00px;top:672.10px;" width="16" height="16" viewBox="0 0 16 16" fill="none"><path d="M6.9 3.9c.4-.1.7-.1 1.1-.1 2.6 0 4.6 1.8 5.6 3.6.1.2.2.4.2.6s-.1.4-.2.6c-.2.4-.5.8-.8 1.2M4.4 4.9C3.6 5.5 2.9 6.4 2.4 7.4c-.1.2-.2.4-.2.6s.1.4.2.6c1 1.8 3 3.6 5.6 3.6 1.1 0 2.2-.4 3.1-.9M6.6 6.5A2.1 2.1 0 0 0 9.5 9.4M2.6 2.4l10.8 10.8" stroke="#8a8a8a" stroke-width="1.2" stroke-linecap="round" stroke-linejoin="round"/></svg>
<svg style="position:absolute;left:1209.00px;top:671.90px;" width="16" height="16" viewBox="0 0 16 16" fill="none"><path d="M4.2 9.75H3.85A1.6 1.6 0 0 1 2.25 8.15V3.8A1.6 1.6 0 0 1 3.85 2.2h4.1a1.6 1.6 0 0 1 1.6 1.6v.4" stroke="#8a8a8a" stroke-width="1.2" stroke-linecap="round"/><rect x="6.2" y="6.25" width="7.65" height="7.75" rx="1.6" stroke="#8a8a8a" stroke-width="1.2"/></svg>
<div style="position:absolute;left:361.00px;top:713.00px;width:874.00px;height:34.00px;box-sizing:border-box;border:1px solid #e2e2e2;border-radius:6px;background:#fcfcfc"></div>
<div style="position:absolute;left:1199.00px;top:713.00px;width:1.00px;height:34.00px;box-sizing:border-box;background:#e2e2e2"></div>
<div class="t" id="lbl_rec2" style="left:373.60px;top:721.25px;font-size:15px;font-weight:400;color:#8f8f8f;letter-spacing:-0.179px;">Recovery Phrase</div>
<svg style="position:absolute;left:501.35px;top:725.80px;" width="661.75" height="10" viewBox="0 0 661.75 10" fill="none"><circle cx="2.250" cy="5" r="2.15" fill="#171717"/><circle cx="10.128" cy="5" r="2.15" fill="#171717"/><circle cx="18.006" cy="5" r="2.15" fill="#171717"/><circle cx="25.884" cy="5" r="2.15" fill="#171717"/><circle cx="33.762" cy="5" r="2.15" fill="#171717"/><circle cx="41.640" cy="5" r="2.15" fill="#171717"/><circle cx="49.518" cy="5" r="2.15" fill="#171717"/><circle cx="57.396" cy="5" r="2.15" fill="#171717"/><circle cx="65.274" cy="5" r="2.15" fill="#171717"/><circle cx="73.152" cy="5" r="2.15" fill="#171717"/><circle cx="81.030" cy="5" r="2.15" fill="#171717"/><circle cx="88.908" cy="5" r="2.15" fill="#171717"/><circle cx="96.786" cy="5" r="2.15" fill="#171717"/><circle cx="104.664" cy="5" r="2.15" fill="#171717"/><circle cx="112.542" cy="5" r="2.15" fill="#171717"/><circle cx="120.420" cy="5" r="2.15" fill="#171717"/><circle cx="128.298" cy="5" r="2.15" fill="#171717"/><circle cx="136.176" cy="5" r="2.15" fill="#171717"/><circle cx="144.054" cy="5" r="2.15" fill="#171717"/><circle cx="151.932" cy="5" r="2.15" fill="#171717"/><circle cx="159.810" cy="5" r="2.15" fill="#171717"/><circle cx="167.688" cy="5" r="2.15" fill="#171717"/><circle cx="175.566" cy="5" r="2.15" fill="#171717"/><circle cx="183.444" cy="5" r="2.15" fill="#171717"/><circle cx="191.322" cy="5" r="2.15" fill="#171717"/><circle cx="199.200" cy="5" r="2.15" fill="#171717"/><circle cx="207.078" cy="5" r="2.15" fill="#171717"/><circle cx="214.956" cy="5" r="2.15" fill="#171717"/><circle cx="222.834" cy="5" r="2.15" fill="#171717"/><circle cx="230.712" cy="5" r="2.15" fill="#171717"/><circle cx="238.590" cy="5" r="2.15" fill="#171717"/><circle cx="246.468" cy="5" r="2.15" fill="#171717"/><circle cx="254.346" cy="5" r="2.15" fill="#171717"/><circle cx="262.224" cy="5" r="2.15" fill="#171717"/><circle cx="270.102" cy="5" r="2.15" fill="#171717"/><circle cx="277.980" cy="5" r="2.15" fill="#171717"/><circle cx="285.858" cy="5" r="2.15" fill="#171717"/><circle cx="293.736" cy="5" r="2.15" fill="#171717"/><circle cx="301.614" cy="5" r="2.15" fill="#171717"/><circle cx="309.492" cy="5" r="2.15" fill="#171717"/><circle cx="317.370" cy="5" r="2.15" fill="#171717"/><circle cx="325.248" cy="5" r="2.15" fill="#171717"/><circle cx="333.126" cy="5" r="2.15" fill="#171717"/><circle cx="341.004" cy="5" r="2.15" fill="#171717"/><circle cx="348.882" cy="5" r="2.15" fill="#171717"/><circle cx="356.760" cy="5" r="2.15" fill="#171717"/><circle cx="364.638" cy="5" r="2.15" fill="#171717"/><circle cx="372.516" cy="5" r="2.15" fill="#171717"/><circle cx="380.394" cy="5" r="2.15" fill="#171717"/><circle cx="388.272" cy="5" r="2.15" fill="#171717"/><circle cx="396.150" cy="5" r="2.15" fill="#171717"/><circle cx="404.028" cy="5" r="2.15" fill="#171717"/><circle cx="411.906" cy="5" r="2.15" fill="#171717"/><circle cx="419.784" cy="5" r="2.15" fill="#171717"/><circle cx="427.662" cy="5" r="2.15" fill="#171717"/><circle cx="435.540" cy="5" r="2.15" fill="#171717"/><circle cx="443.418" cy="5" r="2.15" fill="#171717"/><circle cx="451.296" cy="5" r="2.15" fill="#171717"/><circle cx="459.174" cy="5" r="2.15" fill="#171717"/><circle cx="467.052" cy="5" r="2.15" fill="#171717"/><circle cx="474.930" cy="5" r="2.15" fill="#171717"/><circle cx="482.808" cy="5" r="2.15" fill="#171717"/><circle cx="490.686" cy="5" r="2.15" fill="#171717"/><circle cx="498.564" cy="5" r="2.15" fill="#171717"/><circle cx="506.442" cy="5" r="2.15" fill="#171717"/><circle cx="514.320" cy="5" r="2.15" fill="#171717"/><circle cx="522.198" cy="5" r="2.15" fill="#171717"/><circle cx="530.076" cy="5" r="2.15" fill="#171717"/><circle cx="537.954" cy="5" r="2.15" fill="#171717"/><circle cx="545.832" cy="5" r="2.15" fill="#171717"/><circle cx="553.710" cy="5" r="2.15" fill="#171717"/><circle cx="561.588" cy="5" r="2.15" fill="#171717"/><circle cx="569.466" cy="5" r="2.15" fill="#171717"/><circle cx="577.344" cy="5" r="2.15" fill="#171717"/><circle cx="585.222" cy="5" r="2.15" fill="#171717"/><circle cx="593.100" cy="5" r="2.15" fill="#171717"/><circle cx="600.978" cy="5" r="2.15" fill="#171717"/><circle cx="608.856" cy="5" r="2.15" fill="#171717"/><circle cx="616.734" cy="5" r="2.15" fill="#171717"/><circle cx="624.612" cy="5" r="2.15" fill="#171717"/><circle cx="632.490" cy="5" r="2.15" fill="#171717"/><circle cx="640.368" cy="5" r="2.15" fill="#171717"/><circle cx="648.246" cy="5" r="2.15" fill="#171717"/><circle cx="656.124" cy="5" r="2.15" fill="#171717"/></svg>
<svg style="position:absolute;left:1172.00px;top:722.10px;" width="16" height="16" viewBox="0 0 16 16" fill="none"><path d="M6.9 3.9c.4-.1.7-.1 1.1-.1 2.6 0 4.6 1.8 5.6 3.6.1.2.2.4.2.6s-.1.4-.2.6c-.2.4-.5.8-.8 1.2M4.4 4.9C3.6 5.5 2.9 6.4 2.4 7.4c-.1.2-.2.4-.2.6s.1.4.2.6c1 1.8 3 3.6 5.6 3.6 1.1 0 2.2-.4 3.1-.9M6.6 6.5A2.1 2.1 0 0 0 9.5 9.4M2.6 2.4l10.8 10.8" stroke="#8a8a8a" stroke-width="1.2" stroke-linecap="round" stroke-linejoin="round"/></svg>
<svg style="position:absolute;left:1209.00px;top:721.90px;" width="16" height="16" viewBox="0 0 16 16" fill="none"><path d="M4.2 9.75H3.85A1.6 1.6 0 0 1 2.25 8.15V3.8A1.6 1.6 0 0 1 3.85 2.2h4.1a1.6 1.6 0 0 1 1.6 1.6v.4" stroke="#8a8a8a" stroke-width="1.2" stroke-linecap="round"/><rect x="6.2" y="6.25" width="7.65" height="7.75" rx="1.6" stroke="#8a8a8a" stroke-width="1.2"/></svg>
<div style="position:absolute;left:361.50px;top:763.00px;width:157.00px;height:32.00px;box-sizing:border-box;border:1px solid #e2e2e2;border-radius:6px;background:#fcfcfc"></div>
<div class="t" id="fund2" style="left:372.00px;top:770.40px;font-size:14.5px;font-weight:700;color:#171717;letter-spacing:-0.200px;">Fund with Friendbot</div>
<div class="t" id="last2" style="left:976.15px;top:768.50px;font-size:13px;font-weight:400;color:#6f6f6f;letter-spacing:-0.206px;">Last saved Nov 4, 2025, 7:26 PM UTC</div>
<div style="position:absolute;left:1199.20px;top:763.00px;width:35.80px;height:32.00px;box-sizing:border-box;border:1px solid #f6b8b9;border-radius:6px;background:#fcfcfc"></div>
<svg style="position:absolute;left:1209.00px;top:770.90px;" width="16" height="16" viewBox="0 0 16 16" fill="none"><path d="M3 4.55h10.1M4.2 4.55v7.3c0 1 .8 1.85 1.85 1.85h4c1 0 1.85-.8 1.85-1.85v-7.3M5.8 4.4V3.9c0-.85.7-1.55 1.55-1.55h1.4c.85 0 1.55.7 1.55 1.55v.5M6.65 8.1v2.4M9.2 8.1v2.4" stroke="#e98a8d" stroke-width="1.2" stroke-linecap="round" stroke-linejoin="round"/></svg>
<div style="position:absolute;left:320.00px;top:848.00px;width:956.00px;height:122.00px;box-sizing:border-box;border:1px solid #e2e2e2;border-radius:8px;background:#fcfcfc"></div>
<div style="position:absolute;left:333.00px;top:861.00px;width:32.00px;height:32.00px;box-sizing:border-box;border:1px solid #e2e2e2;border-radius:6px;background:#f8f8f8"></div>
<svg style="position:absolute;left:342.00px;top:870.00px;" width="14" height="14" viewBox="0 0 14 14" fill="none"><circle cx="7" cy="7" r="5.83" stroke="#6e56cf" stroke-width="1.25"/><path d="M7 9.3V6.9M7 4.7h.01" stroke="#6e56cf" stroke-width="1.25" stroke-linecap="round"/></svg>
<div class="t" id="fut_title" style="left:376.80px;top:862.30px;font-size:15px;font-weight:400;color:#171717;letter-spacing:0.013px;-webkit-text-stroke:0.25px #171717;">Looking for Futurenet keypairs?</div>
<div class="t" id="fut_d0" style="left:377.30px;top:886.05px;font-size:15px;font-weight:400;color:#6f6f6f;letter-spacing:-0.036px;">You must switch your network to Futurenet in order to see those saved keypairs. This feature is only available on Futurenet and</div>
<div class="t" id="fut_d1" style="left:377.30px;top:905.95px;font-size:15px;font-weight:400;color:#6f6f6f;letter-spacing:0.071px;">Testnet for security reasons.</div>
<div class="t" id="fut_link" style="left:377.30px;top:938.00px;font-size:14.5px;font-weight:700;color:#5746af;letter-spacing:-0.156px;">Switch to Futurenet</div>
</body></html>
